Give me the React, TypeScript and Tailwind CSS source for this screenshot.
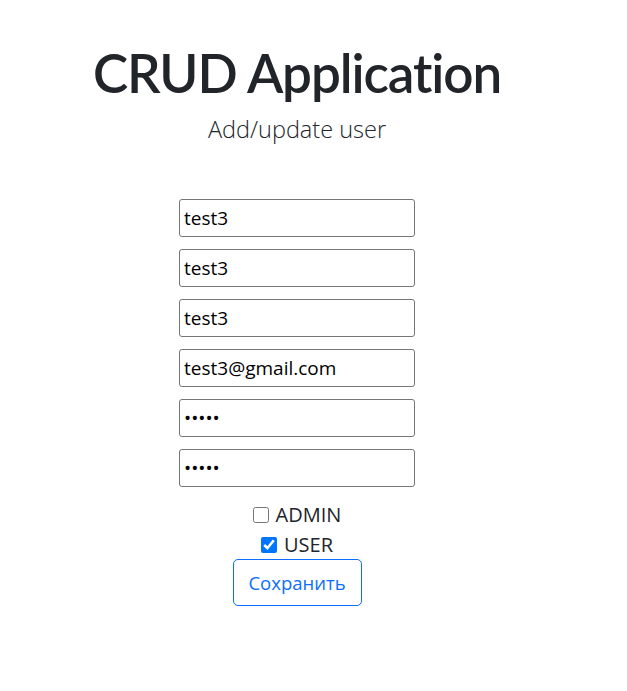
import { useState } from "react";

// Add/update user form, centered in a narrow column
export default function App() {
  const [admin, setAdmin] = useState(false);
  const [user, setUser] = useState(true);

  const fields = [
    { type: "text", value: "test3" },
    { type: "text", value: "test3" },
    { type: "text", value: "test3" },
    { type: "email", value: "test3@gmail.com" },
    { type: "password", value: "12345" },
    { type: "password", value: "12345" },
  ];

  return (
    <div className="w-[594px] flex flex-col items-center font-['Open_Sans',sans-serif] text-[#212529]">
      <h1 className="mt-[39px] font-['Lato',sans-serif] text-[53px] leading-[67px] font-semibold tracking-[-1.1px] [font-variant-ligatures:none]">
        CRUD Application
      </h1>
      <p className="mt-[5px] text-[23.5px] leading-[37px] font-light">Add/update user</p>

      <form className="mt-[51px] flex flex-col items-center" onSubmit={(e) => e.preventDefault()}>
        <div className="flex flex-col gap-3">
          {fields.map((f, i) => (
            <input
              key={i}
              type={f.type}
              defaultValue={f.value}
              className="w-[236px] h-[38px] px-[4px] border border-[#767676] rounded-[3px] text-[19px] text-black bg-white outline-none"
            />
          ))}
        </div>

        <label className="mt-[13px] h-[30px] flex items-center gap-[7px] text-[20px]">
          <input
            type="checkbox"
            checked={admin}
            onChange={() => setAdmin(!admin)}
            className="w-4 h-4 m-0"
          />
          ADMIN
        </label>
        <label className="h-[30px] flex items-center gap-[7px] text-[20px]">
          <input
            type="checkbox"
            checked={user}
            onChange={() => setUser(!user)}
            className="w-4 h-4 m-0"
          />
          USER
        </label>

        <button
          type="submit"
          className="-mt-px w-[129px] h-[47px] border border-[#0d6efd] rounded-[5px] text-[18.5px] leading-[30px] text-[#0d6efd] bg-white"
        >
          Сохранить
        </button>
      </form>
    </div>
  );
}
